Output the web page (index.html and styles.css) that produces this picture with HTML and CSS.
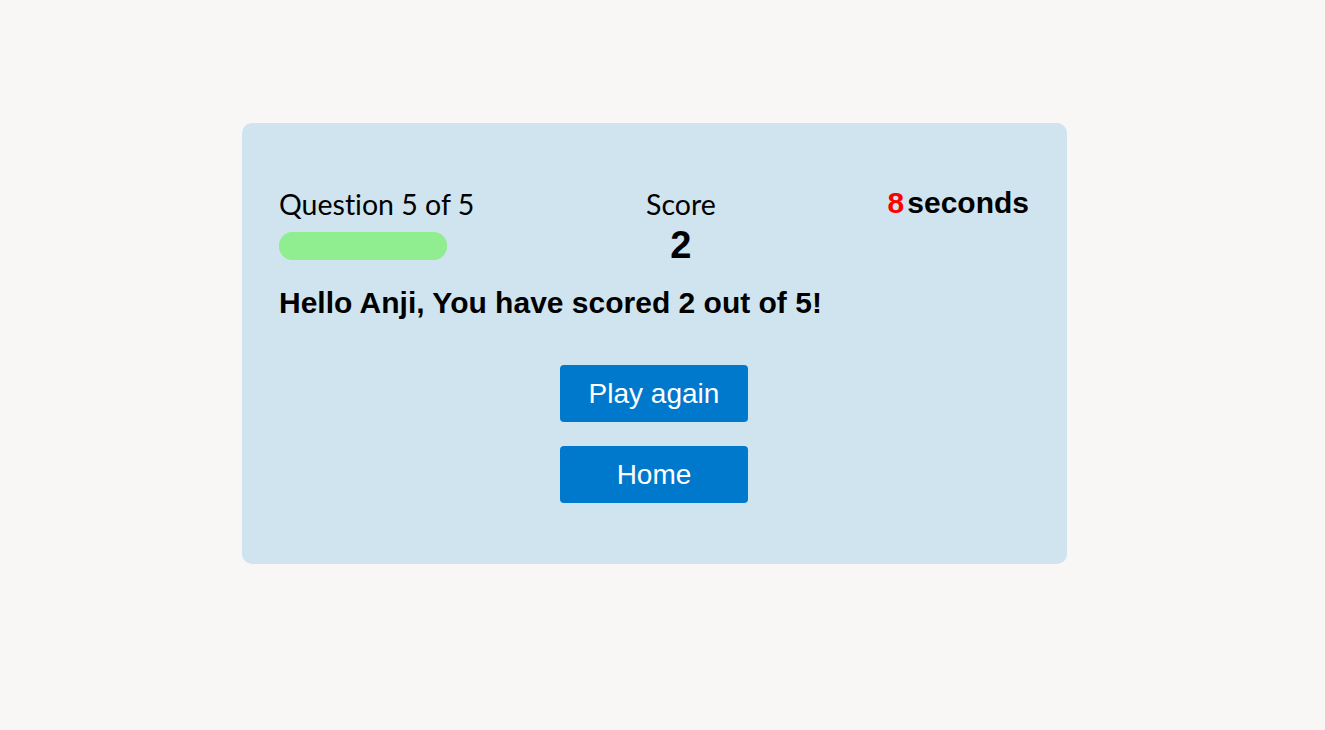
FILE: index.html
```html
<!DOCTYPE html>
<html lang="en">
<head>
<meta charset="utf-8">
<title>Quiz Result</title>
<link rel="stylesheet" href="styles.css">
</head>
<body>
<main class="page">
  <section class="card">
    <div class="hud">
      <div class="hud-item hud-progress">
        <p class="hud-label">Question 5 of 5</p>
        <div class="progress-bar"><div class="progress-fill"></div></div>
      </div>
      <div class="hud-item hud-score">
        <p class="hud-label">Score</p>
        <p class="score-value">2</p>
      </div>
      <div class="hud-item hud-timer">
        <span class="timer-value">8</span><span class="timer-unit">seconds</span>
      </div>
    </div>
    <h2 class="result">Hello Anji, You have scored 2 out of 5!</h2>
    <div class="actions">
      <button class="btn" type="button">Play again</button>
      <button class="btn" type="button">Home</button>
    </div>
  </section>
</main>
</body>
</html>
```
FILE: styles.css
```css
* { box-sizing: border-box; }
html, body { margin: 0; padding: 0; }
body {
  background: #f8f7f6;
  font-family: "Liberation Sans", Arial, sans-serif;
  color: #000;
}
.page {
  display: flex;
  justify-content: center;
  padding: 123px 16px 0 0;
}
.card {
  width: 825px;
  height: 441px;
  background: #cfe4ef;
  border-radius: 10px;
  padding: 62px 38px 0 37px;
}
.hud {
  display: flex;
  justify-content: space-between;
  align-items: flex-start;
}
.hud-label {
  margin: 0;
  font-family: Lato, "Open Sans", sans-serif;
  font-size: 28.5px;
  line-height: 38px;
  font-variant-ligatures: none;
}
.progress-bar {
  width: 168px;
  height: 28px;
  border-radius: 14px;
  background: #90ee90;
  margin-top: 9px;
}
.progress-fill { width: 100%; height: 100%; border-radius: 14px; background: #90ee90; }
.hud-score { text-align: center; }
.score-value {
  margin: 5px 0 0 0;
  font-weight: bold;
  font-size: 38px;
  line-height: 34px;
}
.hud-timer {
  display: flex;
  gap: 3px;
  font-weight: bold;
  font-size: 30px;
  line-height: 36px;
}
.timer-value { color: #ff0000; }
.result {
  margin: 23px 0 0 0;
  font-size: 30px;
  font-weight: bold;
  line-height: 36px;
}
.actions {
  display: flex;
  flex-direction: column;
  align-items: center;
  gap: 24px;
  margin-top: 44px;
}
.btn {
  width: 188px;
  height: 57px;
  border: none;
  border-radius: 4px;
  background: #0079cc;
  color: #fff;
  font-family: "Liberation Sans", Arial, sans-serif;
  font-size: 28px;
  padding: 0;
}
```
